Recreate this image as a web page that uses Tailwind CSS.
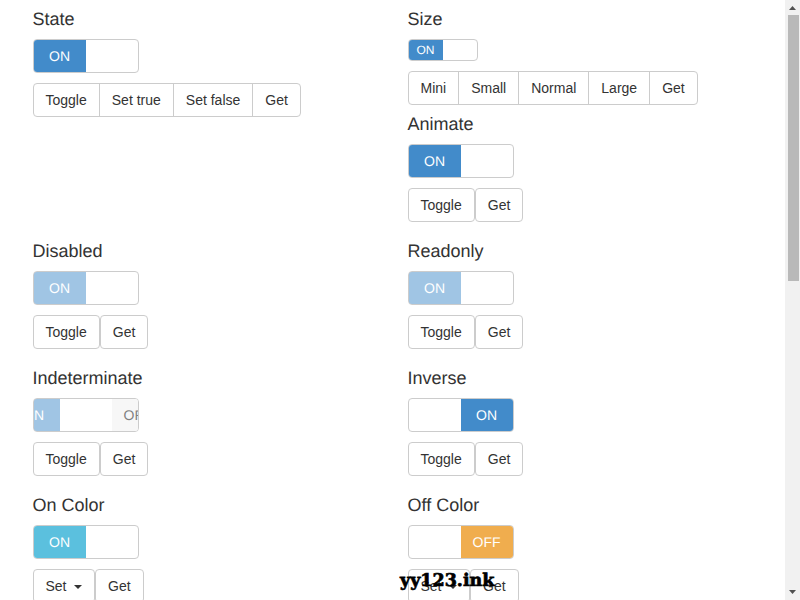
<!DOCTYPE html>
<html lang="en">
<head>
    <meta charset="UTF-8">
    <title>Bootstrap Switch</title>
    <script src="https://cdn.jsdelivr.net/npm/@tailwindcss/browser@4"></script>
</head>
<body class="relative flex h-[600px] overflow-hidden bg-white font-['Liberation_Sans',sans-serif] text-sm text-[#333] antialiased [text-rendering:geometricPrecision]">

    <main class="flex-1 overflow-hidden pl-[32.5px] pt-[9px]">
        <div class="grid grid-cols-[375px_375px] gap-y-[19px]">

            <!-- State -->
            <section>
                <h4 class="mb-[10px] h-5 text-lg leading-5">State</h4>
                <div class="flex h-[34px] w-[106px] overflow-hidden rounded border border-[#ccc]">
                    <span class="flex w-[52px] items-center justify-center bg-[#428bca] text-white">ON</span>
                </div>
                <div class="mt-[10px] flex">
                    <button class="h-[34px] rounded-l border border-[#ccc] px-3">Toggle</button>
                    <button class="-ml-px h-[34px] border border-[#ccc] px-3">Set true</button>
                    <button class="-ml-px h-[34px] border border-[#ccc] px-3">Set false</button>
                    <button class="-ml-px h-[34px] rounded-r border border-[#ccc] px-3">Get</button>
                </div>
            </section>

            <!-- Size + Animate -->
            <section>
                <h4 class="mb-[10px] h-5 text-lg leading-5">Size</h4>
                <div class="flex h-[22px] w-[70px] overflow-hidden rounded border border-[#ccc]">
                    <span class="flex w-[34px] items-center justify-center bg-[#428bca] text-xs text-white">ON</span>
                </div>
                <div class="mt-[10px] flex">
                    <button class="h-[34px] rounded-l border border-[#ccc] px-3">Mini</button>
                    <button class="-ml-px h-[34px] border border-[#ccc] px-3">Small</button>
                    <button class="-ml-px h-[34px] border border-[#ccc] px-3">Normal</button>
                    <button class="-ml-px h-[34px] border border-[#ccc] px-3">Large</button>
                    <button class="-ml-px h-[34px] rounded-r border border-[#ccc] px-3">Get</button>
                </div>
                <h4 class="mb-[10px] mt-[9px] h-5 text-lg leading-5">Animate</h4>
                <div class="flex h-[34px] w-[106px] overflow-hidden rounded border border-[#ccc]">
                    <span class="flex w-[52px] items-center justify-center bg-[#428bca] text-white">ON</span>
                </div>
                <div class="mt-[10px] flex">
                    <button class="h-[34px] rounded border border-[#ccc] px-3">Toggle</button>
                    <button class="h-[34px] rounded border border-[#ccc] px-3">Get</button>
                </div>
            </section>

            <!-- Disabled -->
            <section>
                <h4 class="mb-[10px] h-5 text-lg leading-5">Disabled</h4>
                <div class="flex h-[34px] w-[106px] overflow-hidden rounded border border-[#ccc]">
                    <span class="flex w-[52px] items-center justify-center bg-[#428bca]/50 text-white">ON</span>
                </div>
                <div class="mt-[10px] flex">
                    <button class="h-[34px] rounded border border-[#ccc] px-3">Toggle</button>
                    <button class="h-[34px] rounded border border-[#ccc] px-3">Get</button>
                </div>
            </section>

            <!-- Readonly -->
            <section>
                <h4 class="mb-[10px] h-5 text-lg leading-5">Readonly</h4>
                <div class="flex h-[34px] w-[106px] overflow-hidden rounded border border-[#ccc]">
                    <span class="flex w-[52px] items-center justify-center bg-[#428bca]/50 text-white">ON</span>
                </div>
                <div class="mt-[10px] flex">
                    <button class="h-[34px] rounded border border-[#ccc] px-3">Toggle</button>
                    <button class="h-[34px] rounded border border-[#ccc] px-3">Get</button>
                </div>
            </section>

            <!-- Indeterminate: the inner strip sits half way, so both labels get clipped -->
            <section>
                <h4 class="mb-[10px] h-5 text-lg leading-5">Indeterminate</h4>
                <div class="flex h-[34px] w-[106px] overflow-hidden rounded border border-[#ccc]">
                    <div class="-ml-[26px] flex shrink-0">
                        <span class="flex w-[52px] items-center justify-center bg-[#428bca]/50 text-white">ON</span>
                        <span class="w-[52px]"></span>
                        <span class="flex w-[52px] items-center justify-center bg-[#f7f7f7] text-[#808080]">OFF</span>
                    </div>
                </div>
                <div class="mt-[10px] flex">
                    <button class="h-[34px] rounded border border-[#ccc] px-3">Toggle</button>
                    <button class="h-[34px] rounded border border-[#ccc] px-3">Get</button>
                </div>
            </section>

            <!-- Inverse -->
            <section>
                <h4 class="mb-[10px] h-5 text-lg leading-5">Inverse</h4>
                <div class="flex h-[34px] w-[106px] justify-end overflow-hidden rounded border border-[#ccc]">
                    <span class="flex w-[52px] items-center justify-center bg-[#428bca] text-white">ON</span>
                </div>
                <div class="mt-[10px] flex">
                    <button class="h-[34px] rounded border border-[#ccc] px-3">Toggle</button>
                    <button class="h-[34px] rounded border border-[#ccc] px-3">Get</button>
                </div>
            </section>

            <!-- On Color -->
            <section>
                <h4 class="mb-[10px] h-5 text-lg leading-5">On Color</h4>
                <div class="flex h-[34px] w-[106px] overflow-hidden rounded border border-[#ccc]">
                    <span class="flex w-[52px] items-center justify-center bg-[#5bc0de] text-white">ON</span>
                </div>
                <div class="mt-[10px] flex">
                    <button class="flex h-[34px] items-center rounded border border-[#ccc] px-3">Set <span class="ml-[7.5px] mt-[2px] border-x-4 border-t-4 border-x-transparent border-t-[#333]"></span></button>
                    <button class="h-[34px] rounded border border-[#ccc] px-3">Get</button>
                </div>
            </section>

            <!-- Off Color -->
            <section>
                <h4 class="mb-[10px] h-5 text-lg leading-5">Off Color</h4>
                <div class="flex h-[34px] w-[106px] justify-end overflow-hidden rounded border border-[#ccc]">
                    <span class="flex w-[52px] items-center justify-center bg-[#f0ad4e] text-white">OFF</span>
                </div>
                <div class="mt-[10px] flex">
                    <button class="flex h-[34px] items-center rounded border border-[#ccc] px-3">Set <span class="ml-[7.5px] mt-[2px] border-x-4 border-t-4 border-x-transparent border-t-[#333]"></span></button>
                    <button class="h-[34px] rounded border border-[#ccc] px-3">Get</button>
                </div>
            </section>

        </div>
    </main>

    <!-- scrollbar -->
    <aside class="flex w-[15px] shrink-0 flex-col items-center bg-[#f1f1f1]">
        <svg class="h-[15px] w-[15px] shrink-0" viewBox="0 0 15 15"><path d="M4 10h7L7.5 6z" fill="#505050"/></svg>
        <div class="ml-[1px] h-[266px] w-[11px] bg-[#b9b9b9]"></div>
        <svg class="mt-auto h-[15px] w-[15px] shrink-0" viewBox="0 0 15 15"><path d="M4 5h7L7.5 9z" fill="#505050"/></svg>
    </aside>

    <!-- watermark over the page -->
    <div class="absolute left-[400px] top-[570px] font-['DejaVu_Serif',serif] text-[17.5px] leading-[22px] font-bold text-black [-webkit-text-stroke:0.7px_black]">yy123.ink</div>

</body>
</html>
